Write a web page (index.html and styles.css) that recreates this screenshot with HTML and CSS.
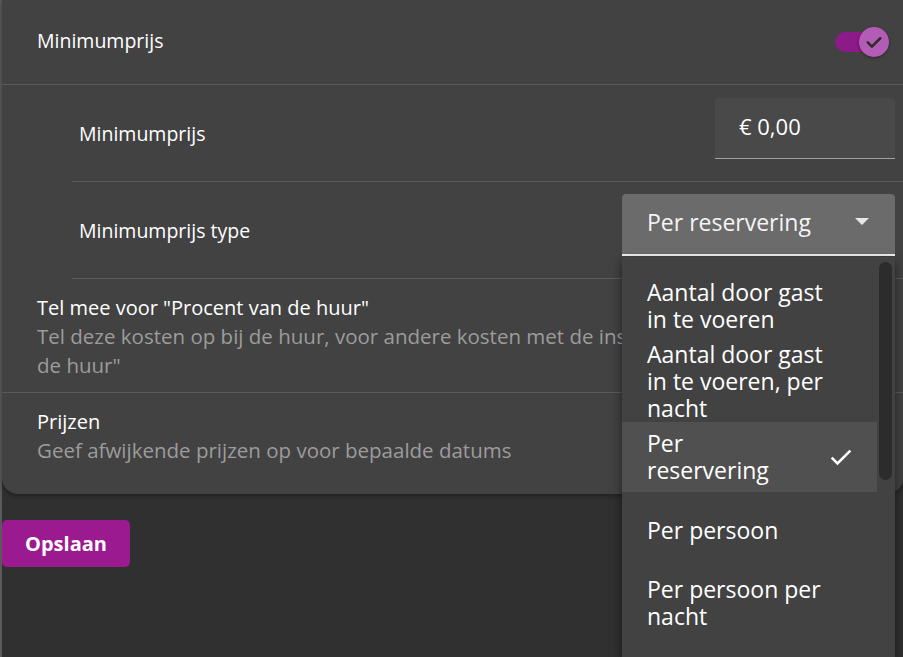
FILE: index.html
```html
<!DOCTYPE html>
<html lang="nl">
<head>
    <meta charset="UTF-8">
    <meta name="viewport" content="width=device-width, initial-scale=1.0">
    <title>Kosten bewerken</title>
    <link rel="stylesheet" href="styles.css">
</head>
<body>

    <div class="page">
        <div class="card">
            <div class="row row-switch">
                <span class="label">Minimumprijs</span>
                <span class="switch">
                    <span class="track"></span>
                    <span class="thumb">
                        <svg width="20" height="20" viewBox="0 0 24 24"><path d="M4.5 12.5l5 5 10-10" fill="none" stroke="#2b2b2b" stroke-width="3" stroke-linecap="round" stroke-linejoin="round"/></svg>
                    </span>
                </span>
            </div>

            <div class="sublist">
                <div class="subrow">
                    <span class="label">Minimumprijs</span>
                    <div class="field">€ 0,00</div>
                </div>
                <div class="subrow">
                    <span class="label">Minimumprijs type</span>
                    <div class="select">
                        <span>Per reservering</span>
                        <svg width="14" height="8" viewBox="0 0 14 8"><path d="M0 0h14L7 7z" fill="#e8e8e8"/></svg>
                    </div>
                </div>
            </div>

            <div class="row row-text">
                <div class="primary">Tel mee voor "Procent van de huur"</div>
                <div class="secondary">Tel deze kosten op bij de huur, voor andere kosten met de instelling "Procent van de huur"</div>
            </div>
            <div class="row row-text">
                <div class="primary">Prijzen</div>
                <div class="secondary">Geef afwijkende prijzen op voor bepaalde datums</div>
            </div>
        </div>

        <button class="save">Opslaan</button>

        <!-- open menu of the "Minimumprijs type" select -->
        <div class="menu">
            <ul class="options">
                <li class="option">Aantal door gast in te voeren</li>
                <li class="option crowded">Aantal door gast in te voeren, per nacht</li>
                <li class="option selected">
                    <span>Per reservering</span>
                    <svg width="28" height="28" viewBox="0 0 24 24"><path d="M4 12.5l5 5L20 6.5" fill="none" stroke="#fff" stroke-width="2.2"/></svg>
                </li>
                <li class="option single">Per persoon</li>
                <li class="option">Per persoon per nacht</li>
            </ul>
            <div class="scrollbar"></div>
        </div>
    </div>

</body>
</html>
```

FILE: styles.css
```css
body {
    margin: 0;
    padding: 0;
    background-color: #303030;
    font-family: "Open Sans", "Lato", sans-serif;
    color: white;
    overflow: hidden;
}

.page {
    position: relative;
    height: 657px;
    box-sizing: border-box;
    border-left: 2px solid #5a5a5a;
}

.card {
    background-color: #424242;
    border-radius: 0 0 16px 16px;
    box-shadow: 0 2px 4px rgba(0, 0, 0, 0.35);
    padding-bottom: 17px;
}

.label {
    font-size: 19.5px;
}

.row {
    border-bottom: 1px solid #5a5a5a;
}

.row:last-child {
    border-bottom: none;
}

.row-switch {
    height: 84px;
    display: flex;
    align-items: center;
    justify-content: space-between;
    padding: 0 14px 0 35px;
}

.row-switch .label {
    margin-top: -3px;
}

.switch {
    position: relative;
    width: 56px;
    height: 30px;
}

.track {
    position: absolute;
    left: 2px;
    top: 5px;
    width: 40px;
    height: 20px;
    border-radius: 10px;
    background-color: #8c1a88;
}

.thumb {
    position: absolute;
    right: 0;
    top: 0;
    width: 30px;
    height: 30px;
    border-radius: 50%;
    background-color: #b35cb5;
    box-shadow: 0 1px 3px rgba(0, 0, 0, 0.4);
    display: flex;
    align-items: center;
    justify-content: center;
}

.sublist {
    margin-left: 70px;
    border-bottom: 1px solid #5a5a5a;
}

.subrow {
    height: 96px;
    display: flex;
    align-items: center;
    justify-content: space-between;
    padding: 0 8px 0 7px;
    border-bottom: 1px solid #5a5a5a;
}

.subrow:last-child {
    border-bottom: none;
}

.field {
    width: 180px;
    height: 61px;
    box-sizing: border-box;
    padding: 0 24px 4px;
    display: flex;
    align-items: center;
    margin-top: -10px;
    background-color: #494949;
    border-radius: 4px 4px 0 0;
    border-bottom: 1px solid #a0a0a0;
    font-size: 22px;
}

.select {
    width: 273px;
    height: 62px;
    box-sizing: border-box;
    padding: 0 26px 4px 25px;
    display: flex;
    align-items: center;
    justify-content: space-between;
    margin-top: -10px;
    background-color: #6b6b6b;
    border-radius: 4px 4px 0 0;
    border-bottom: 2px solid #f2f2f2;
    font-size: 23px;
    color: #f4f4f4;
}

.row-text {
    padding: 14px 35px 12px;
}

.primary {
    font-size: 20px;
    line-height: 29px;
}

.secondary {
    font-size: 20.5px;
    line-height: 29px;
    color: #9c9c9c;
    max-width: 790px;
}

.save {
    margin-top: 26px;
    width: 128px;
    height: 47px;
    border: none;
    border-radius: 5px;
    background-color: #9c1a8f;
    color: white;
    font-family: inherit;
    font-size: 20px;
    font-weight: bold;
    cursor: pointer;
}

.menu {
    position: absolute;
    left: 620px;
    top: 257px;
    width: 273px;
    height: 400px;
    background-color: #424242;
    box-shadow: 0 4px 10px rgba(0, 0, 0, 0.5);
    overflow: hidden;
}

.options {
    list-style: none;
    margin: 0;
    padding: 14px 0 0;
    width: 255px;
}

.option {
    box-sizing: border-box;
    padding: 8px 35px 8px 25px;
    font-size: 23px;
    line-height: 27px;
    display: flex;
    align-items: center;
}

.option.crowded {
    padding-top: 0;
    padding-bottom: 0;
}

.option.single {
    min-height: 76px;
}

.option.selected {
    background-color: #505050;
    padding-right: 22px;
}

.option.selected span {
    flex: 1;
    margin-right: 24px;
}

.scrollbar {
    position: absolute;
    right: 3px;
    top: 5px;
    width: 13px;
    height: 218px;
    border-radius: 7px;
    background-color: #2c2c2c;
}
```
